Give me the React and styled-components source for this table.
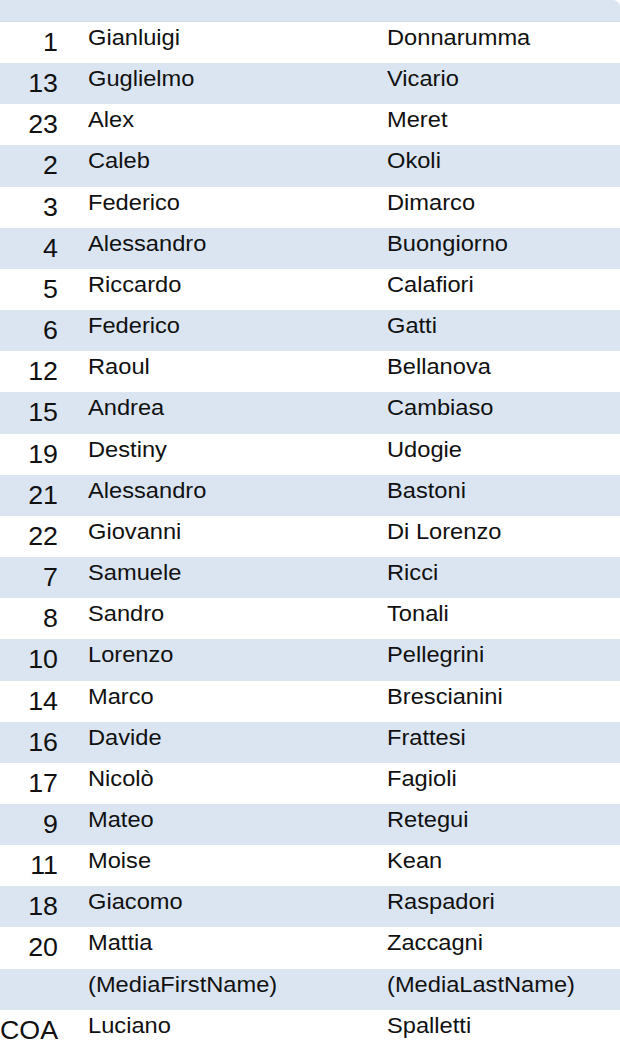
import React from "react";
import styled, { createGlobalStyle } from "styled-components";

const Global = createGlobalStyle`
  html, body { margin: 0; padding: 0; background: #ffffff; }
  body { font-family: "Liberation Sans", Arial, sans-serif; color: #111111; }
`;

const Sheet = styled.div`
  width: 620px;
  height: 1064px;
  overflow: hidden;
  background: #ffffff;
  display: flex;
  flex-direction: column;
`;

const HeaderBand = styled.div`
  height: 22px;
  flex: none;
  background: #dbe5f1;
  border-top-right-radius: 7px;
  box-shadow: inset 0 -1px 0 #d2dcea;
`;

const Row = styled.div`
  flex: none;
  height: 41.17px;
  display: grid;
  grid-template-columns: 58px 269px 1fr;
  column-gap: 30px;
  background: ${(p) => (p.$shaded ? "#dbe5f1" : "#ffffff")};
`;

const Num = styled.div`
  font-family: "Liberation Sans", Arial, sans-serif;
  font-size: 26px;
  line-height: 1;
  padding-top: 7px;
  text-align: right;
  white-space: nowrap;
  direction: rtl;
  transform: scaleX(1.03);
  transform-origin: right center;
`;

const Name = styled.div`
  font-family: "Liberation Sans", Arial, sans-serif;
  font-size: 21.5px;
  line-height: 1;
  padding-top: 6px;
  white-space: nowrap;
  transform: scaleX(1.1);
  transform-origin: left center;
`;

const players = [
  ["1", "Gianluigi", "Donnarumma"],
  ["13", "Guglielmo", "Vicario"],
  ["23", "Alex", "Meret"],
  ["2", "Caleb", "Okoli"],
  ["3", "Federico", "Dimarco"],
  ["4", "Alessandro", "Buongiorno"],
  ["5", "Riccardo", "Calafiori"],
  ["6", "Federico", "Gatti"],
  ["12", "Raoul", "Bellanova"],
  ["15", "Andrea", "Cambiaso"],
  ["19", "Destiny", "Udogie"],
  ["21", "Alessandro", "Bastoni"],
  ["22", "Giovanni", "Di Lorenzo"],
  ["7", "Samuele", "Ricci"],
  ["8", "Sandro", "Tonali"],
  ["10", "Lorenzo", "Pellegrini"],
  ["14", "Marco", "Brescianini"],
  ["16", "Davide", "Frattesi"],
  ["17", "Nicolò", "Fagioli"],
  ["9", "Mateo", "Retegui"],
  ["11", "Moise", "Kean"],
  ["18", "Giacomo", "Raspadori"],
  ["20", "Mattia", "Zaccagni"],
  ["", "(MediaFirstName)", "(MediaLastName)"],
  ["COA", "Luciano", "Spalletti"],
];

export default function App() {
  return (
    <>
      <Global />
      <Sheet>
        <HeaderBand />
        {players.map(([n, first, last], i) => (
          <Row key={i} $shaded={i % 2 === 1}>
            <Num>{n}</Num>
            <Name>{first}</Name>
            <Name>{last}</Name>
          </Row>
        ))}
      </Sheet>
    </>
  );
}
